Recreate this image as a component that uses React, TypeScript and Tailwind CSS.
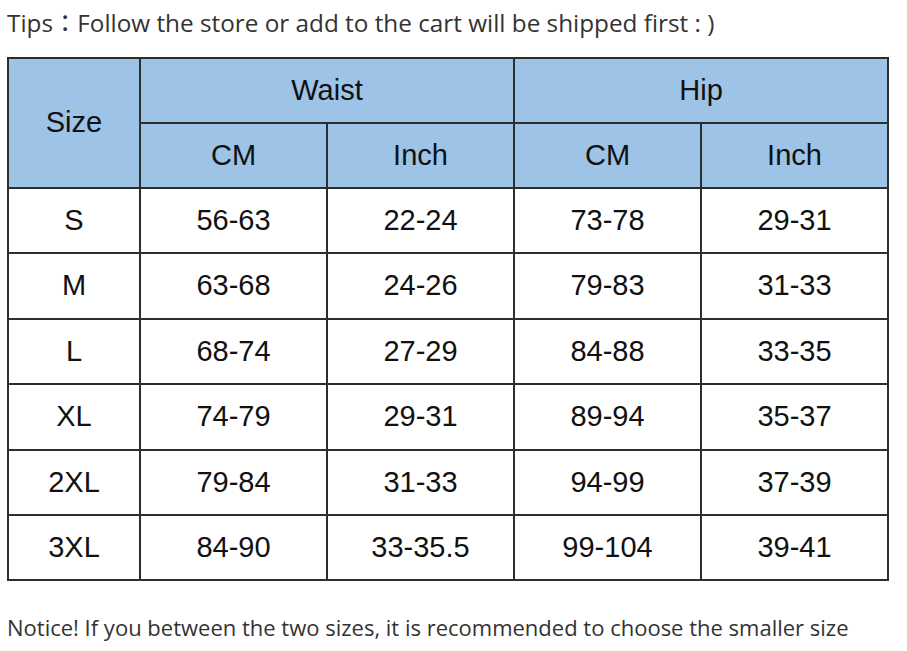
const rows = [
  ["S", "56-63", "22-24", "73-78", "29-31"],
  ["M", "63-68", "24-26", "79-83", "31-33"],
  ["L", "68-74", "27-29", "84-88", "33-35"],
  ["XL", "74-79", "29-31", "89-94", "35-37"],
  ["2XL", "79-84", "31-33", "94-99", "37-39"],
  ["3XL", "84-90", "33-35.5", "99-104", "39-41"],
];

const cell = "border-2 border-[#2e2e2e] text-center align-middle p-0";

export default function App() {
  return (
    <div className="w-[907px] h-[651px] bg-white pl-[7px] pt-[5px]">
      <p className="font-['Open_Sans','Noto_Sans_CJK_JP',sans-serif] text-[24.3px] leading-[36px] text-[#333]">
        Tips：Follow the store or add to the cart will be shipped first : )
      </p>
      <table className="mt-[16px] border-collapse table-fixed w-[881px] font-['Liberation_Sans',Arial,sans-serif] text-[29px] text-[#111]">
        <colgroup>
          <col className="w-[132px]" />
          <col className="w-[187px]" />
          <col className="w-[187px]" />
          <col className="w-[187px]" />
          <col className="w-[187px]" />
        </colgroup>
        <thead className="bg-[#9dc3e6]">
          <tr className="h-[65px]">
            <th rowSpan={2} className={`${cell} font-normal`}>Size</th>
            <th colSpan={2} className={`${cell} font-normal`}>Waist</th>
            <th colSpan={2} className={`${cell} font-normal`}>Hip</th>
          </tr>
          <tr className="h-[65px]">
            <th className={`${cell} font-normal`}>CM</th>
            <th className={`${cell} font-normal`}>Inch</th>
            <th className={`${cell} font-normal`}>CM</th>
            <th className={`${cell} font-normal`}>Inch</th>
          </tr>
        </thead>
        <tbody>
          {rows.map((r) => (
            <tr key={r[0]} className="h-[65.4px]">
              {r.map((v, i) => (
                <td key={i} className={cell}>{v}</td>
              ))}
            </tr>
          ))}
        </tbody>
      </table>
      <p className="mt-[28px] font-['Open_Sans',sans-serif] text-[22px] leading-[36px] text-[#333]">
        Notice! If you between the two sizes, it is recommended to choose the smaller size
      </p>
    </div>
  );
}
